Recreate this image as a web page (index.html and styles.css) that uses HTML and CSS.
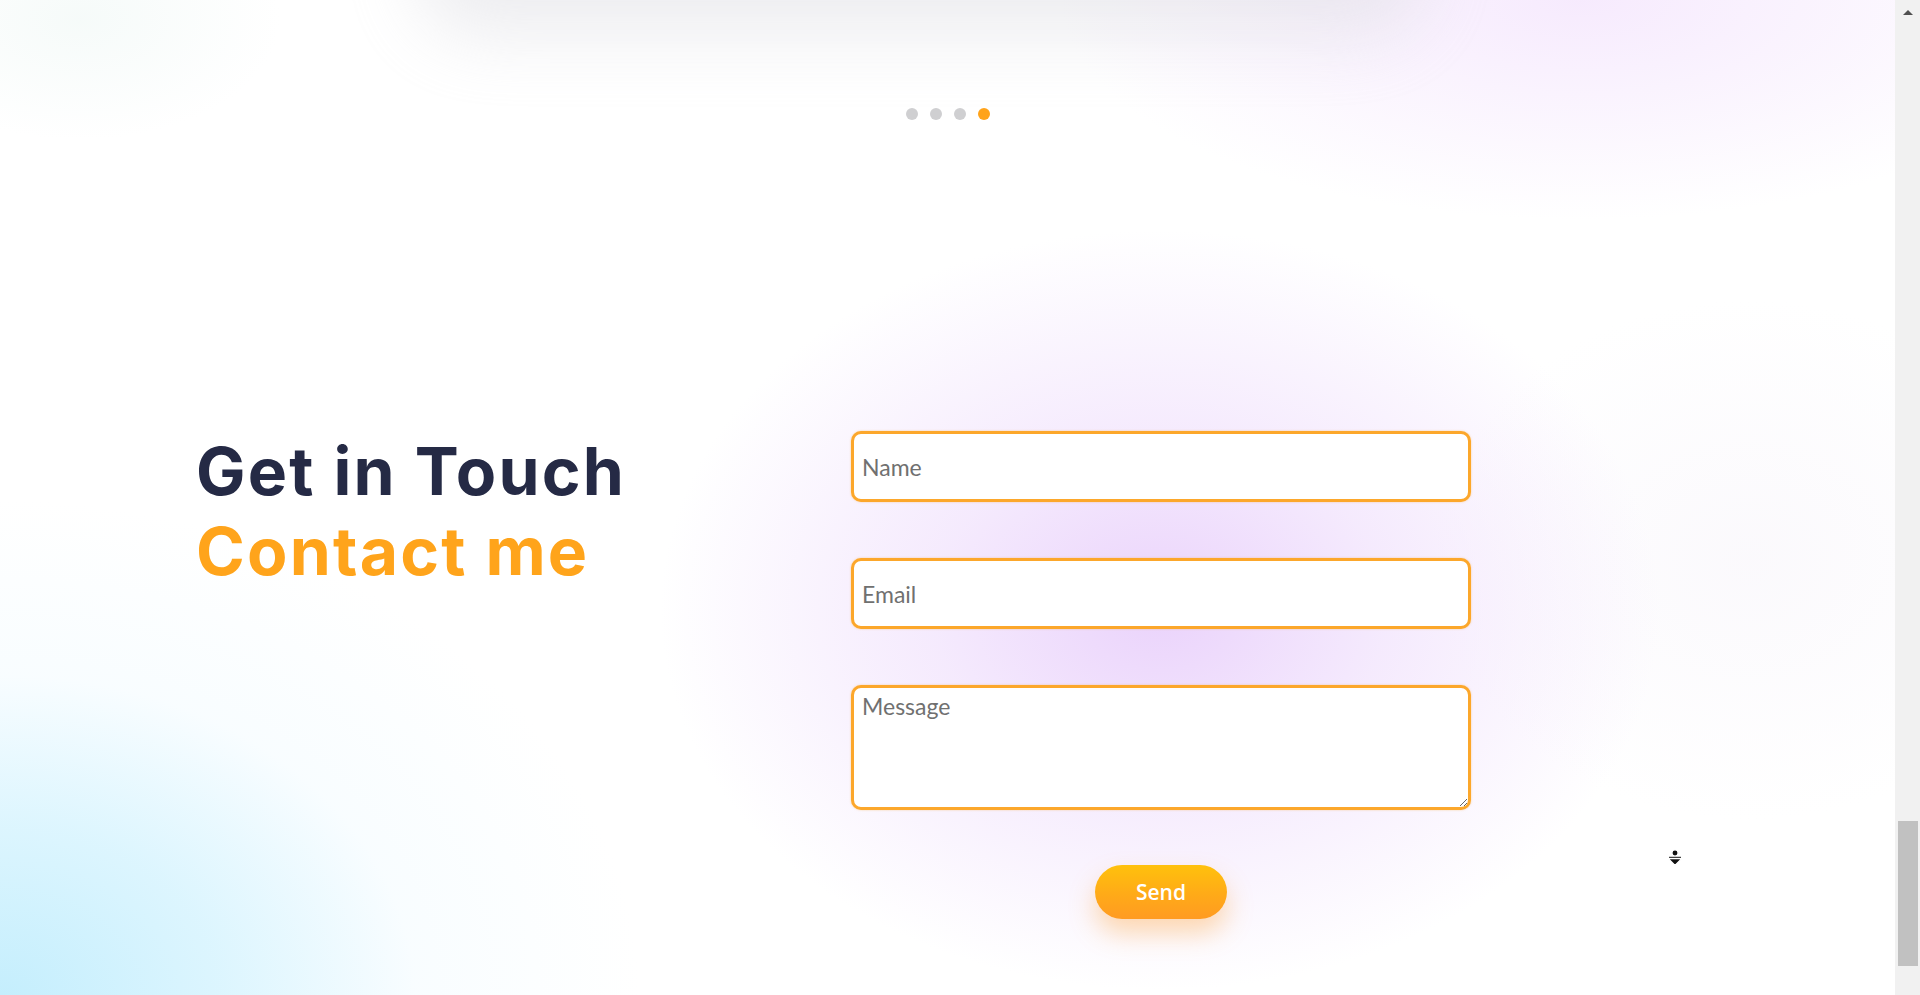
FILE: index.html
```html
<!DOCTYPE html>
<html lang="en">
<head>
<meta charset="utf-8">
<title>Contact</title>
<link rel="stylesheet" href="styles.css">
</head>
<body>
<div class="screen">
  <main class="page">
    <div class="blob blob-top"></div>
    <div class="dots">
      <span class="dot"></span>
      <span class="dot"></span>
      <span class="dot"></span>
      <span class="dot active"></span>
    </div>
    <section class="contact">
      <div class="intro">
        <h2 class="title">
          <span class="title-dark">Get in Touch</span>
          <span class="title-accent">Contact me</span>
        </h2>
      </div>
      <form class="form">
        <input class="field" type="text" placeholder="Name">
        <input class="field" type="email" placeholder="Email">
        <textarea class="field area" placeholder="Message"></textarea>
        <button class="send" type="button">Send</button>
      </form>
    </section>
    <svg class="cursor" width="18" height="20" viewBox="0 0 18 20">
      <circle cx="9" cy="5" r="3.2" fill="#111" stroke="#fff" stroke-width="1.5"/>
      <path d="M2 10.5 H16 L9 17.5 Z" fill="#111" stroke="#fff" stroke-width="1.5" stroke-linejoin="round"/>
      <path d="M3 9.3 H15" stroke="#111" stroke-width="1"/>
    </svg>
  </main>
  <div class="scrollbar">
    <div class="arrow-up"></div>
    <div class="thumb"></div>
  </div>
</div>
</body>
</html>
```

FILE: styles.css
```css
* { box-sizing: border-box; }

html, body {
  margin: 0;
  padding: 0;
  height: 100%;
}

body {
  font-family: "Lato", "Noto Sans", sans-serif;
  background: #ffffff;
  overflow: hidden;
}

.screen {
  display: flex;
  width: 1920px;
  height: 995px;
}

.page {
  position: relative;
  flex: 1;
  height: 995px;
  overflow: hidden;
  background:
    radial-gradient(ellipse 500px 380px at 1160px 610px, rgba(232, 206, 251, 0.9) 0%, rgba(238, 220, 252, 0.6) 45%, rgba(248, 238, 254, 0) 100%),
    radial-gradient(ellipse 640px 500px at 0px 1000px, rgba(196, 238, 253, 1) 0%, rgba(212, 243, 254, 0.8) 35%, rgba(236, 249, 255, 0.35) 65%, rgba(255, 255, 255, 0) 100%),
    radial-gradient(ellipse 520px 220px at 1580px 0px, rgba(244, 229, 253, 0.8) 0%, rgba(250, 244, 254, 0) 100%),
    radial-gradient(ellipse 200px 120px at 80px 20px, rgba(242, 249, 247, 0.7) 0%, rgba(255, 255, 255, 0) 100%),
    radial-gradient(ellipse 320px 260px at 1750px 560px, rgba(250, 248, 252, 0.8) 0%, rgba(255, 255, 255, 0) 100%),
    #ffffff;
}

.blob-top {
  position: absolute;
  left: 440px;
  top: -140px;
  width: 960px;
  height: 140px;
  border-radius: 40px;
  background: #fff;
  box-shadow: 0 12px 70px 24px rgba(215, 215, 222, 0.45);
}

.dots {
  position: relative;
  display: flex;
  justify-content: center;
  gap: 12px;
  padding-top: 108px;
}

.dot {
  width: 12px;
  height: 12px;
  border-radius: 50%;
  background: #cfcfd1;
}

.dot.active {
  background: #ffa31a;
}

.contact {
  position: relative;
  display: flex;
  align-items: flex-start;
  margin-top: 311px;
  padding-left: 196px;
}

.intro {
  width: 655px;
}

.title {
  margin: 0;
  font-family: "Inter", "Open Sans", sans-serif;
  font-weight: 700;
  font-size: 66px;
  line-height: 80px;
  letter-spacing: 2.2px;
}

.title span {
  display: block;
}

.title-dark { color: #252a45; }
.title-accent { color: #ffa41b; }

.form {
  display: flex;
  flex-direction: column;
  width: 620px;
}

.field {
  display: block;
  width: 100%;
  height: 71px;
  margin: 0 0 56px;
  padding: 0 8px;
  border: 3px solid #fca72b;
  border-radius: 10px;
  background: #ffffff;
  font-family: "Lato", "Noto Sans", sans-serif;
  font-size: 23px;
  color: #333;
  outline: none;
  box-shadow: 0 0 2px rgba(252, 167, 43, 0.5);
}

.field::placeholder {
  color: #707070;
}

.area {
  height: 125px;
  margin-bottom: 55px;
  padding: 4px 8px;
  resize: vertical;
  line-height: normal;
}

.send {
  align-self: center;
  width: 132px;
  height: 54px;
  border: none;
  border-radius: 27px;
  background: linear-gradient(180deg, #ffc10c 0%, #ffaa18 55%, #ff9b22 100%);
  color: #ffffff;
  font-family: "Open Sans", sans-serif;
  font-weight: 600;
  font-size: 21px;
  cursor: pointer;
  box-shadow: 0 14px 26px rgba(255, 160, 50, 0.38);
}

.cursor {
  position: absolute;
  left: 1666px;
  top: 848px;
}

.scrollbar {
  display: flex;
  flex-direction: column;
  align-items: center;
  width: 25px;
  height: 995px;
  background: #f1f1f1;
}

.arrow-up {
  margin-top: 10px;
  width: 0;
  height: 0;
  border-left: 5px solid transparent;
  border-right: 5px solid transparent;
  border-bottom: 5px solid #505050;
}

.thumb {
  margin-top: auto;
  margin-bottom: 29px;
  width: 20px;
  height: 145px;
  background: #c1c1c1;
}
```
